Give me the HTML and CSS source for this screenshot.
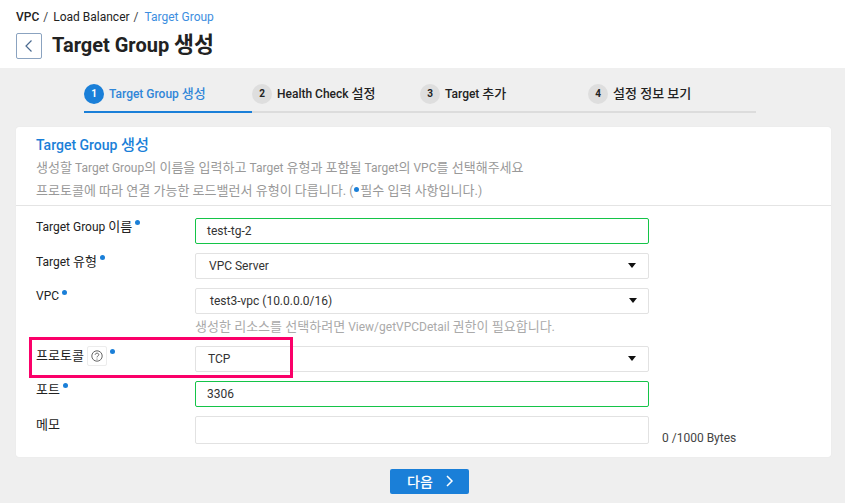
FILE: index.html
```html
<!DOCTYPE html>
<html lang="ko">
<head>
<meta charset="utf-8">
<title>Target Group 생성</title>
<link rel="stylesheet" href="styles.css">
</head>
<body>
<header class="top">
  <nav class="crumbs"><b class="crumb-root">VPC</b><span class="sep">/</span><span>Load Balancer</span><span class="sep">/</span><span class="crumb-cur">Target Group</span></nav>
  <div class="title-row">
    <button class="back" type="button" aria-label="뒤로"><svg width="10" height="14" viewBox="0 0 10 14"><path d="M7.500 1.500 2 7l5.500 5.500" fill="none" stroke="#4a6a90" stroke-width="1.2"/></svg></button>
    <h1>Target Group <span class="ko">생성</span></h1>
  </div>
</header>
<ol class="steps">
  <li class="step active"><span class="num">1</span><span>Target Group <span class="ko">생성</span></span></li>
  <li class="step"><span class="num">2</span><span>Health Check <span class="ko">설정</span></span></li>
  <li class="step"><span class="num">3</span><span>Target <span class="ko">추가</span></span></li>
  <li class="step"><span class="num">4</span><span class="ko">설정 정보 보기</span></li>
</ol>
<main class="card">
  <section class="intro">
    <h2>Target Group <span class="ko">생성</span></h2>
    <p><span class="ko">생성할</span> Target Group<span class="ko">의 이름을 입력하고</span> Target <span class="ko">유형과 포함될</span> Target<span class="ko">의</span> VPC<span class="ko">를 선택해주세요</span></p>
    <p><span class="ko">프로토콜에 따라 연결 가능한 로드밸런서 유형이 다릅니다.</span> (<i class="dot inline"></i><span class="ko">필수 입력 사항입니다.</span>)</p>
  </section>
  <form class="form">
    <div class="row"><label><span>Target Group <span class="ko">이름</span></span><i class="dot"></i></label><div class="field ok">test-tg-2</div></div>
    <div class="row"><label><span>Target <span class="ko">유형</span></span><i class="dot"></i></label><div class="field select">VPC Server<i class="caret"></i></div></div>
    <div class="row vpc"><label>VPC<i class="dot"></i></label><div class="field select shifted">test3-vpc (10.0.0.0/16)<i class="caret"></i></div></div>
    <p class="hint"><span class="ko">생성한 리소스를 선택하려면</span> View/getVPCDetail <span class="ko">권한이 필요합니다.</span></p>
    <div class="row proto">
      <label><span class="ko">프로토콜</span><span class="help"><svg width="12" height="12" viewBox="0 0 12 12"><circle cx="6" cy="6" r="5.200" fill="none" stroke="#555" stroke-width=".9"/><path d="M4.200 4.800c0-2.200 3.600-2.200 3.600-.1 0 1.200-1.800 1.300-1.800 2.700" fill="none" stroke="#555" stroke-width=".9"/><circle cx="6" cy="9" r=".6" fill="#555"/></svg></span><i class="dot"></i></label>
      <div class="field select tcp">TCP<i class="caret"></i></div>
      <span class="highlight"></span>
    </div>
    <div class="row"><label><span class="ko">포트</span><i class="dot"></i></label><div class="field ok">3306</div></div>
    <div class="row memo"><label><span class="ko">메모</span></label><div class="field tall"></div><span class="count">0 /1000 Bytes</span></div>
  </form>
</main>
<div class="actions"><button class="next" type="button">다음<svg width="10" height="14" viewBox="0 0 10 14"><path d="M2 2l5 5-5 5" fill="none" stroke="#fff" stroke-width="1.500"/></svg></button></div>
</body>
</html>
```
FILE: styles.css
```css
* { box-sizing: border-box; }
html, body { margin: 0; height: 100%; }
body {
  background: #efefef;
  color: #222;
  font: 12px/18px Roboto, "Noto Sans CJK KR", sans-serif;
  overflow: hidden;
}
.ko { font-size: 1.085em; }
.top { height: 68px; background: #fff; padding: 8px 16px 0; }
.crumbs { display: flex; height: 18px; align-items: center; }
.crumb-root { font-weight: 500; }
.sep { margin: 0 5px 0 4px; color: #444; }
.crumb-cur { color: #3d8ee0; margin-left: 1px; }
.title-row { display: flex; align-items: center; gap: 10px; margin-top: 7px; }
.back {
  width: 26px; height: 26px; padding: 0;
  display: flex; align-items: center; justify-content: center;
  background: #fff; border: 1px solid #8ba3c0; border-radius: 2px;
}
h1 { margin: -1px 0 1px; font-size: 20px; line-height: 26px; font-weight: 700; color: #222; }

.steps {
  list-style: none; margin: 16px 0 0 84px; padding: 0;
  width: 672px; height: 29px; display: grid; grid-template-columns: repeat(4, 168px);
}
.step {
  display: flex; align-items: flex-start; gap: 5px;
  border-bottom: 2px solid #dcdcdc;
  font-weight: 500; color: #222; line-height: 20px;
}
.step.active { border-bottom-color: #1a7fd8; color: #2f86d8; }
.num {
  width: 20px; height: 20px; border-radius: 50%;
  background: #dedede; color: #222;
  font-size: 10px; font-weight: 700; text-align: center;
}
.active .num { background: #1a7fd8; color: #fff; }

.card {
  margin: 14px 14px 0 16px; height: 330px;
  background: #fff; border-radius: 3px;
  box-shadow: 0 0 1px #ddd;
}
.intro { height: 79px; padding: 9px 20px 0; border-bottom: 1px solid #e4e4e4; }
h2 { margin: 0 0 4px; font-size: 14px; line-height: 18px; font-weight: 500; color: #1a7fd8; }
.intro p { margin: 0 0 3px; color: #999; line-height: 19px; }

.form { padding: 12px 20px 0; }
.row { position: relative; display: flex; align-items: flex-start; margin-bottom: 9px; }
.row label { width: 159px; flex: none; line-height: 17px; display: flex; align-items: flex-start; }
.dot {
  display: inline-block; width: 5px; height: 5px; margin: 2px 0 0 3px;
  border-radius: 50%; background: #1a7fd8;
}
.dot.inline { margin: 0 1px 3px 1px; }
.field {
  position: relative; width: 454px; height: 26px; padding: 0 12px;
  border: 1px solid #e2e2e2; border-radius: 2px;
  line-height: 24px; color: #333; background: #fff;
}
.field.ok { border-color: #14c448; padding-left: 11px; }
.select { padding-left: 13px; }
.tcp { padding-left: 12px; }
.shifted { padding-left: 14px; }
.caret {
  position: absolute; right: 12px; top: 9px;
  border-style: solid; border-color: #111 transparent transparent;
  border-width: 5px 4px 0;
}
.shifted .caret { right: 11px; }
.row.vpc { margin-bottom: 4px; }
.hint { margin: 0 0 10px 159px; height: 18px; color: #aaa; }
.proto label { padding-top: 1px; }
.help {
  display: inline-flex; align-items: center; justify-content: center;
  width: 20px; height: 20px; margin: -1px 0 0 3px;
  border: 1px solid #ececec; border-radius: 2px;
}
.row.proto .dot { margin-left: 3px; margin-top: 2px; }
.highlight {
  position: absolute; left: -7px; top: -9px; width: 264px; height: 41px;
  border: 3px solid #fb0069;
}
.field.tall { height: 28px; }
.memo { margin-bottom: 0; }
.count { margin: 7px 0 0 13px; color: #444; line-height: 30px; }

.actions { display: flex; justify-content: center; margin-top: 12px; padding-left: 14px; }
.next {
  width: 79px; height: 25px; padding: 0 0 2px 17px;
  display: flex; align-items: center; gap: 12px;
  background: #1a7fd8; border: 0; border-radius: 2px;
  color: #fff; font: 500 14px Roboto, "Noto Sans CJK KR", sans-serif;
}
```
